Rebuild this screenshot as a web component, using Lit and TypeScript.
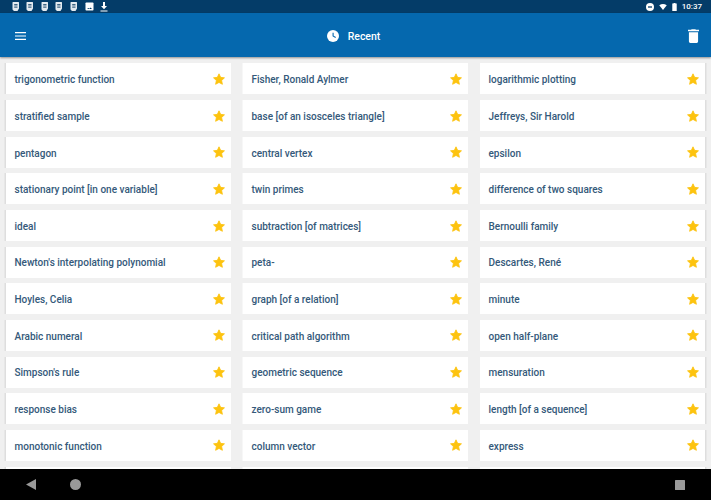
import { LitElement, html, css, svg } from "lit";
import { customElement } from "lit/decorators.js";

const columns = [
  ["trigonometric function","stratified sample","pentagon","stationary point [in one variable]","ideal","Newton's interpolating polynomial","Hoyles, Celia","Arabic numeral","Simpson's rule","response bias","monotonic function",""],
  ["Fisher, Ronald Aylmer","base [of an isosceles triangle]","central vertex","twin primes","subtraction [of matrices]","peta-","graph [of a relation]","critical path algorithm","geometric sequence","zero-sum game","column vector",""],
  ["logarithmic plotting","Jeffreys, Sir Harold","epsilon","difference of two squares","Bernoulli family","Descartes, René","minute","open half-plane","mensuration","length [of a sequence]","express",""],
];
const rows = columns[0].flatMap((_, i) => columns.map((c) => c[i]));

const sim = svg`<path d="M1 0h5.500a.7.700 0 0 1 .5.700V6.500L5.500 9h-3.500L.500 7.500V.700A.7.700 0 0 1 1 0z" fill="#e4eaef"/><path d="M2.200 2h3.300v1.400H2.200zM2.200 4.400h3.300v1.400H2.200z" fill="#3f6482"/>`;

@customElement("app-root")
export class AppRoot extends LitElement {
  static styles = css`
    :host { display: block; width: 711px; height: 500px; font-family: Roboto, "Liberation Sans", sans-serif; }
    .page { height: 500px; display: flex; flex-direction: column; background: #f0f0f0; overflow: hidden; }
    .status { height: 13px; flex: none; background: #043c68; display: flex; align-items: center; padding: 0 9px 0 12px; color: #fff; }
    .notes { display: flex; align-items: center; gap: 6.400px; }
    .notes svg { display: block; }
    .notes .pic { margin-left: 1px; }
    .sys { margin-left: auto; display: flex; align-items: center; font-size: 8px; font-weight: 500; }
    .sys svg { display: block; margin-right: 5px; }
    .bar { height: 44px; flex: none; background: #0568ae; color: #fff; display: flex; align-items: center; justify-content: space-between; padding: 1px 12px 0 15px; box-sizing: border-box; box-shadow: 0 1px 2px rgba(0,0,0,.4); position: relative; z-index: 1; }
    .bar svg { display: block; }
    .title { display: flex; align-items: center; gap: 9px; font-size: 10.500px; font-weight: 500; margin-right: 7px; }
    .title span { padding-top: 1px; }
    .list { flex: 1; min-height: 0; overflow: hidden; padding: 6.400px 6px 0 6px; display: grid; grid-template-columns: repeat(3, 225px); column-gap: 12px; grid-auto-rows: 31px; row-gap: 5.667px; }
    .card { background: #fff; display: flex; align-items: center; justify-content: space-between; padding: 0 6px 0 8.500px; color: #34597a; font-size: 10px; font-weight: 500; white-space: nowrap; box-shadow: -1px 0 0 #f7f7f7; }
    .card:nth-child(3n+1) { box-shadow: -1.500px 0 0 #dedede; }
    .card:nth-child(3n) { box-shadow: 1.500px 0 0 #dedede; }
    .card span { padding-top: 1.600px; }
    .card svg { display: block; flex: none; }
    .nav { height: 31px; flex: none; background: #000; display: flex; align-items: center; padding: 0 26px; position: relative; z-index: 1; }
    .nav svg { display: block; }
    .nav .home { margin-left: 34px; }
    .nav .recents { margin-left: auto; }
  `;

  star() {
    return html`<svg width="12" height="12" viewBox="1 1 22 22"><path fill="#fdc30f" stroke="#fdc30f" stroke-width="1.500" stroke-linejoin="round" d="M12 2.500l3 6.500 7 .9-5.200 4.800 1.400 7L12 18.300l-6.200 3.400 1.400-7L2 9.900l7-.9z"/></svg>`;
  }

  render() {
    return html`<div class="page">
      <div class="status">
        <div class="notes">
          ${[0,1,2,3,4].map(() => html`<svg width="8" height="9" viewBox="0 0 8 9">${sim}</svg>`)}
          <svg class="pic" width="9" height="9" viewBox="0 0 9 9"><rect x="0.500" y="0.500" width="8" height="8" rx=".8" fill="#fff"/><path d="M2 7l1.500-1 1 .7 1-1.200L7 7z" fill="#043c68"/></svg>
          <svg width="8" height="10" viewBox="0 0 8 10"><path d="M3 0h2v4h2L4 7.200 1 4h2zM0.500 8.500h7v1h-7z" fill="#fff"/></svg>
        </div>
        <div class="sys">
          <svg width="8" height="8" viewBox="0 0 10 10"><circle cx="5" cy="5" r="5" fill="#fff"/><rect x="2.500" y="4.200" width="5" height="1.600" fill="#043c68"/></svg>
          <svg width="8" height="6" viewBox="0 0 10 8"><path d="M0 1.800Q5-1.600 10 1.800L5 8z" fill="#fff"/></svg>
          <svg width="5" height="8" viewBox="0 0 5 9"><path d="M1.500 0h2v.7H5V9H0V.7h1.500z" fill="#fff"/></svg>
          <span>10:37</span>
        </div>
      </div>
      <div class="bar">
        <svg width="11" height="8" viewBox="0 0 11 8"><path d="M0 0h11v1.200H0zM0 3.400h11v1.200H0zM0 6.800h11V8H0z" fill="#fff"/></svg>
        <div class="title">
          <svg width="12" height="12" viewBox="0 0 13 13"><circle cx="6.500" cy="6.500" r="6.500" fill="#fff"/><path d="M6 3h1.200v3.200l2.500 1.500-.6 1L6 6.900z" fill="#0568ae"/></svg>
          <span>Recent</span>
        </div>
        <svg width="11" height="14" viewBox="0 0 12 15"><path d="M4 0h4l.7.800H12v1.500H0V.800h3.300zM1 3.300h10V13.500A1.500 1.500 0 0 1 9.500 15h-7A1.500 1.500 0 0 1 1 13.500z" fill="#fff"/></svg>
      </div>
      <div class="list">
        ${rows.map((t) => html`<div class="card"><span>${t}</span>${this.star()}</div>`)}
      </div>
      <div class="nav">
        <svg width="10" height="11" viewBox="0 0 10 11"><path d="M10 0v11L0 5.500z" fill="#999"/></svg>
        <svg class="home" width="11" height="11" viewBox="0 0 11 11"><circle cx="5.500" cy="5.500" r="5.500" fill="#999"/></svg>
        <svg class="recents" width="10" height="10" viewBox="0 0 10 10"><rect width="10" height="10" rx=".5" fill="#999"/></svg>
      </div>
    </div>`;
  }
}
